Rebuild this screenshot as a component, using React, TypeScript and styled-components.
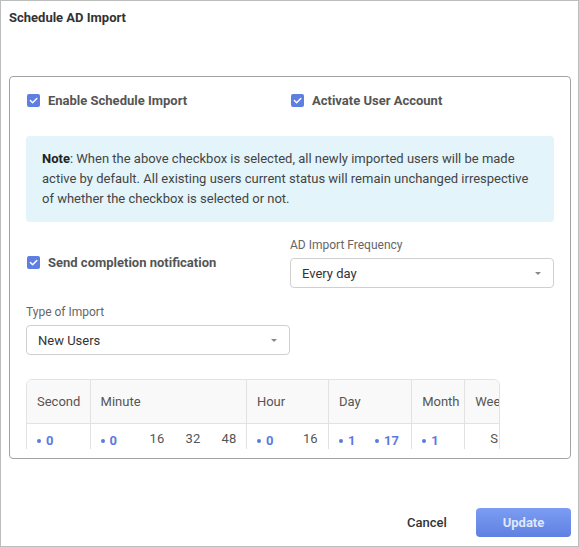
import React from "react";
import styled, { createGlobalStyle } from "styled-components";

const GlobalStyle = createGlobalStyle`
  html, body {
    margin: 0;
    padding: 0;
    background: #fff;
  }
  body {
    font-family: Roboto, "Liberation Sans", Arial, sans-serif;
    color: #333;
  }
  * {
    box-sizing: border-box;
  }
`;

const Dialog = styled.div`
  width: 579px;
  height: 547px;
  border: 1px solid #bdbdbd;
  display: flex;
  flex-direction: column;
  background: #fff;
`;

const Header = styled.div`
  padding: 9px 8px 0;
  .title {
    font-size: 13px;
    line-height: 16px;
    font-weight: 700;
    color: #333;
  }
`;

const Panel = styled.div`
  margin: 50px 7px 0 8px;
  height: 383px;
  border: 1px solid #a3a3a3;
  border-radius: 4px;
  padding: 13px 16px 9px 16px;
  display: flex;
  flex-direction: column;
`;

const Scroll = styled.div`
  flex: 1;
  overflow: hidden;
`;

const Grid = styled.div<{ $mt?: number; $align?: string }>`
  display: grid;
  grid-template-columns: 1fr 1fr;
  margin-top: ${(p) => p.$mt || 0}px;
  align-items: ${(p) => p.$align || "start"};
`;

const CheckRow = styled.label`
  display: flex;
  align-items: center;
  height: 20px;
  gap: 8px;
  padding-left: 1px;
  font-size: 13px;
  font-weight: 700;
  color: #555;
  cursor: pointer;
`;

const Note = styled.div`
  margin-top: 26px;
  background: #e3f4fb;
  border-radius: 4px;
  padding: 13px 16px;
  font-size: 13px;
  line-height: 20px;
  color: #444;
  b {
    color: #222;
    font-weight: 700;
  }
`;

const Field = styled.div`
  display: flex;
  flex-direction: column;
  gap: 5px;
`;

const FieldLabel = styled.div`
  font-size: 12px;
  line-height: 16px;
  color: #666;
`;

const Select = styled.div`
  height: 30px;
  border: 1px solid #cfcfcf;
  border-radius: 4px;
  display: flex;
  align-items: center;
  justify-content: space-between;
  padding: 0 12px 0 11px;
  font-size: 13px;
  color: #333;
  .caret {
    width: 0;
    height: 0;
    border-left: 3px solid transparent;
    border-right: 3px solid transparent;
    border-top: 3px solid #888;
  }
`;

const TableWrap = styled.div`
  margin-top: 24px;
  width: 474px;
  border: 1px solid #e2e2e2;
  border-radius: 6px;
  overflow: hidden;
`;

const Table = styled.table`
  border-collapse: collapse;
  table-layout: fixed;
  width: 560px;
  font-size: 13px;
  th,
  td {
    border-left: 1px solid #e2e2e2;
    text-align: left;
    padding: 0 0 0 10px;
    white-space: nowrap;
  }
  th:first-child,
  td:first-child {
    border-left: none;
  }
  th {
    height: 43px;
    background: #f9f9f9;
    font-weight: 400;
    color: #555;
    border-bottom: 1px solid #e2e2e2;
  }
  td {
    height: 34px;
    vertical-align: top;
    padding-top: 7px;
    color: #555;
  }
`;

const Val = styled.span<{ $w: number; $on?: boolean }>`
  display: inline-flex;
  align-items: center;
  width: ${(p) => p.$w}px;
  line-height: 16px;
  font-weight: ${(p) => (p.$on ? 700 : 400)};
  color: ${(p) => (p.$on ? "#5b7bdc" : "#555")};
  &::before {
    content: "";
    display: ${(p) => (p.$on ? "inline-block" : "none")};
    width: 4px;
    height: 4px;
    border-radius: 50%;
    background: #5b7bdc;
    margin-right: 5px;
  }
`;

const Footer = styled.div`
  margin-top: auto;
  display: flex;
  justify-content: flex-end;
  align-items: center;
  gap: 15px;
  padding: 0 7px 9px 0;
`;

const Button = styled.button<{ $primary?: boolean }>`
  height: 29px;
  min-width: ${(p) => (p.$primary ? 95 : 68)}px;
  border: none;
  border-radius: 4px;
  font-family: inherit;
  font-size: 13px;
  font-weight: ${(p) => (p.$primary ? 700 : 500)};
  color: ${(p) => (p.$primary ? "#dfe7fc" : "#333")};
  background: ${(p) =>
    p.$primary ? "linear-gradient(#7c9df2, #5f80e1)" : "transparent"};
  cursor: pointer;
`;

const Check = () => (
  <svg width="13" height="13" viewBox="0 0 13 13">
    <rect width="13" height="13" rx="2" fill="#5d7fe2" />
    <path
      d="M3.4 6.6 L5.6 8.7 L9.8 4.4"
      fill="none"
      stroke="#fff"
      strokeWidth="1.4"
      strokeLinecap="round"
      strokeLinejoin="round"
    />
  </svg>
);

type Item = { v: string; w: number; on?: boolean };
const columns: { name: string; width: number; items: Item[] }[] = [
  { name: "Second", width: 63, items: [{ v: "0", w: 30, on: true }] },
  {
    name: "Minute",
    width: 156,
    items: [
      { v: "0", w: 49, on: true },
      { v: "16", w: 36 },
      { v: "32", w: 36 },
      { v: "48", w: 24 },
    ],
  },
  {
    name: "Hour",
    width: 82,
    items: [
      { v: "0", w: 46, on: true },
      { v: "16", w: 20 },
    ],
  },
  {
    name: "Day",
    width: 83,
    items: [
      { v: "1", w: 36, on: true },
      { v: "17", w: 30, on: true },
    ],
  },
  { name: "Month", width: 53, items: [{ v: "1", w: 30, on: true }] },
  {
    name: "Week",
    width: 122,
    items: [
      { v: "", w: 15 },
      { v: "S", w: 20 },
      { v: "M", w: 20 },
      { v: "T", w: 20 },
    ],
  },
];

const App = () => {
  return (
    <>
      <GlobalStyle />
      <Dialog>
        <Header>
          <div className="title">Schedule AD Import</div>
        </Header>
        <Panel>
          <Scroll>
            <Grid>
              <CheckRow>
                <Check />
                Enable Schedule Import
              </CheckRow>
              <CheckRow>
                <Check />
                Activate User Account
              </CheckRow>
            </Grid>
            <Note>
              <b>Note</b>: When the above checkbox is selected, all newly
              imported users will be made active by default. All existing users
              current status will remain unchanged irrespective of whether the
              checkbox is selected or not.
            </Note>
            <Grid $mt={15} $align="center">
              <CheckRow>
                <Check />
                Send completion notification
              </CheckRow>
              <Field>
                <FieldLabel>AD Import Frequency</FieldLabel>
                <Select>
                  Every day
                  <span className="caret" />
                </Select>
              </Field>
            </Grid>
            <Grid $mt={16}>
              <Field>
                <FieldLabel>Type of Import</FieldLabel>
                <Select>
                  New Users
                  <span className="caret" />
                </Select>
              </Field>
            </Grid>
            <TableWrap>
              <Table>
                <colgroup>
                  {columns.map((c) => (
                    <col key={c.name} style={{ width: c.width }} />
                  ))}
                </colgroup>
                <thead>
                  <tr>
                    {columns.map((c) => (
                      <th key={c.name}>{c.name}</th>
                    ))}
                  </tr>
                </thead>
                <tbody>
                  <tr>
                    {columns.map((c) => (
                      <td key={c.name}>
                        {c.items.map((it, i) => (
                          <Val key={i} $w={it.w} $on={it.on}>
                            {it.v}
                          </Val>
                        ))}
                      </td>
                    ))}
                  </tr>
                </tbody>
              </Table>
            </TableWrap>
          </Scroll>
        </Panel>
        <Footer>
          <Button>Cancel</Button>
          <Button $primary>Update</Button>
        </Footer>
      </Dialog>
    </>
  );
};

export default App;
